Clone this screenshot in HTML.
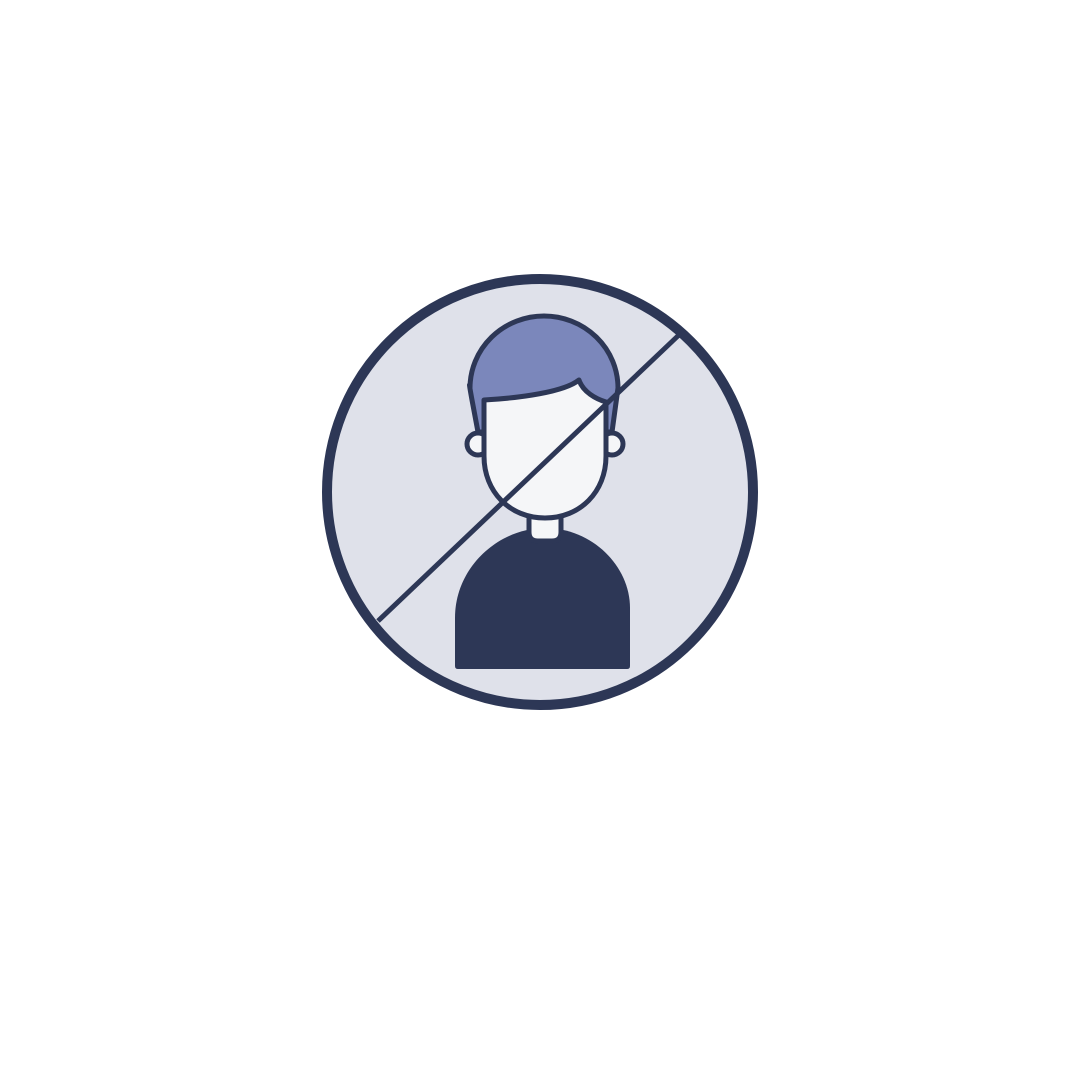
<!DOCTYPE html>
<html><head><style>html,body{margin:0;padding:0;background:#fff;width:1080px;height:1080px;overflow:hidden}</style></head>
<body>
<svg width="1080" height="1080" viewBox="0 0 1080 1080" xmlns="http://www.w3.org/2000/svg">
<circle cx="540" cy="492" r="213" fill="#dfe1ea" stroke="#2d3756" stroke-width="10"/>
<path d="M455,666 V618 C455,566 500,528 545,528 C592,528 630,566 630,608 V666 Q630,669 627,669 H458 Q455,669 455,666 Z" fill="#2d3756"/>
<path d="M529,512 V532 Q529,541 538,541 H552 Q561,541 561,532 V512 Z" fill="#f5f6f8" stroke="#2d3756" stroke-width="5"/>
<circle cx="478" cy="444" r="11" fill="#f5f6f8" stroke="#2d3756" stroke-width="5"/>
<circle cx="612" cy="444" r="11" fill="#f5f6f8" stroke="#2d3756" stroke-width="5"/>
<path d="M478,432 L472,400 C468,378 470,386 470,388 A74,72 0 0 1 618,388 L612,432 Z" fill="#7b87bb" stroke="#2d3756" stroke-width="5" stroke-linejoin="round"/>
<path d="M484,400 C520,398 564,392 579,380 C583,392 596,399 606,402 V456 C606,492 580,518 545,518 C510,518 484,492 484,456 Z" fill="#f5f6f8" stroke="#2d3756" stroke-width="5" stroke-linejoin="round"/>
<line x1="378" y1="621" x2="681" y2="333" stroke="#2d3756" stroke-width="5"/>
</svg>
</body></html>
